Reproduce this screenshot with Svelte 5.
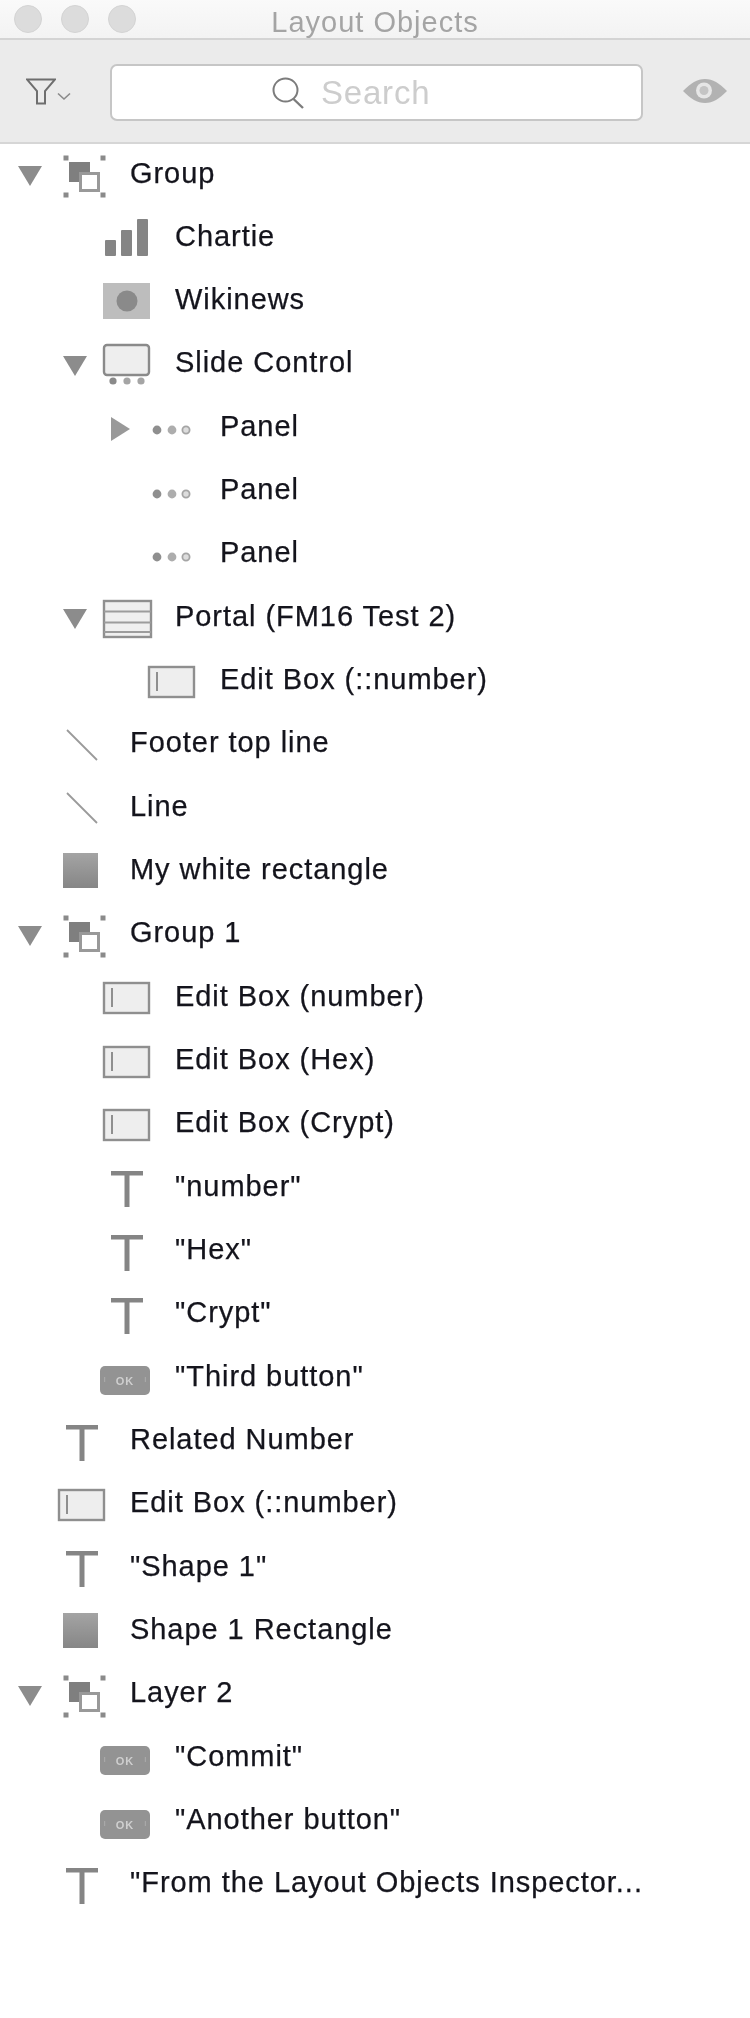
<script>
  const rows = [
    { t: 'Group', l: 0, i: 'group', a: 'down' },
    { t: 'Chartie', l: 1, i: 'chart' },
    { t: 'Wikinews', l: 1, i: 'web' },
    { t: 'Slide Control', l: 1, i: 'slide', a: 'down' },
    { t: 'Panel', l: 2, i: 'panel', a: 'right' },
    { t: 'Panel', l: 2, i: 'panel' },
    { t: 'Panel', l: 2, i: 'panel' },
    { t: 'Portal (FM16 Test 2)', l: 1, i: 'portal', a: 'down' },
    { t: 'Edit Box (::number)', l: 2, i: 'edit' },
    { t: 'Footer top line', l: 0, i: 'line' },
    { t: 'Line', l: 0, i: 'line' },
    { t: 'My white rectangle', l: 0, i: 'rect' },
    { t: 'Group 1', l: 0, i: 'group', a: 'down' },
    { t: 'Edit Box (number)', l: 1, i: 'edit' },
    { t: 'Edit Box (Hex)', l: 1, i: 'edit' },
    { t: 'Edit Box (Crypt)', l: 1, i: 'edit' },
    { t: '"number"', l: 1, i: 'text' },
    { t: '"Hex"', l: 1, i: 'text' },
    { t: '"Crypt"', l: 1, i: 'text' },
    { t: '"Third button"', l: 1, i: 'button' },
    { t: 'Related Number', l: 0, i: 'text' },
    { t: 'Edit Box (::number)', l: 0, i: 'edit' },
    { t: '"Shape 1"', l: 0, i: 'text' },
    { t: 'Shape 1 Rectangle', l: 0, i: 'rect' },
    { t: 'Layer 2', l: 0, i: 'group', a: 'down' },
    { t: '"Commit"', l: 1, i: 'button' },
    { t: '"Another button"', l: 1, i: 'button' },
    { t: '"From the Layout Objects Inspector...', l: 0, i: 'text' }
  ];
</script>

<div class="window">
  <header class="titlebar">
    <div class="lights"><span></span><span></span><span></span></div>
    <div class="title">Layout Objects</div>
  </header>

  <div class="toolbar">
    <svg class="filter" width="30" height="27" viewBox="0 0 30 27" fill="none">
      <path d="M1 1.5 H29 L19 13 V25.5 H11 V13 Z" stroke="#6e6e6e" stroke-width="2" />
    </svg>
    <svg class="chev" width="16" height="9" viewBox="0 0 16 9" fill="none">
      <path d="M2 1.5 L8 7 L14 1.5" stroke="#8a8a8a" stroke-width="1.6" />
    </svg>
    <div class="search">
      <svg width="33" height="32" viewBox="0 0 33 32" fill="none">
        <ellipse cx="13.5" cy="13" rx="12" ry="11.5" stroke="#7c7c7c" stroke-width="2" />
        <path d="M21.5 22 L31 31" stroke="#7c7c7c" stroke-width="2.4" />
      </svg>
      <span>Search</span>
    </div>
    <svg class="eye" width="44" height="24" viewBox="0 0 44 24">
      <path d="M0 12 C8 4 14 0 22 0 C30 0 36 4 44 12 C36 20 30 24 22 24 C14 24 8 20 0 12 Z" fill="#b2b2b2" />
      <circle cx="21" cy="11.5" r="8" fill="#e6e6e6" />
      <circle cx="21" cy="11.5" r="4.5" fill="#c4c4c4" />
    </svg>
  </div>

  <ul class="tree">
    {#each rows as r}
      <li class="row lvl{r.l}">
        <span class="arrow">
          {#if r.a === 'down'}
            <svg width="36" height="56" viewBox="0 0 36 56"><path d="M6 22 H30 L18 42 Z" fill="#8c8c8c" /></svg>
          {:else if r.a === 'right'}
            <svg width="36" height="56" viewBox="0 0 36 56"><path d="M9 20 L28 32 L9 44 Z" fill="#999" /></svg>
          {/if}
        </span>
        <svg class="icon" width="56" height="56" viewBox="0 0 56 56">
          {#if r.i === 'group'}
            <g fill="#8a8a8a">
              <rect x="9.5" y="11.5" width="5" height="5" /><rect x="46.5" y="11.5" width="5" height="5" />
              <rect x="9.5" y="48.5" width="5" height="5" /><rect x="46.5" y="48.5" width="5" height="5" />
              <rect x="15" y="18" width="21" height="20" fill="#7f7f7f" />
            </g>
            <rect x="26.5" y="29.5" width="18" height="17" fill="#fff" stroke="#999" stroke-width="3" />
          {:else if r.i === 'chart'}
            <g fill="#858585">
              <rect x="6" y="33" width="11" height="16" rx="1" />
              <rect x="22" y="23" width="11" height="26" rx="1" />
              <rect x="38" y="12" width="11" height="37" rx="1" />
            </g>
          {:else if r.i === 'web'}
            <rect x="4" y="12" width="47" height="36" fill="#bdbdbd" />
            <circle cx="28" cy="30" r="10.5" fill="#8a8a8a" />
          {:else if r.i === 'slide'}
            <rect x="5" y="11" width="45" height="30" rx="3" fill="#eee" stroke="#8a8a8a" stroke-width="2.4" />
            <circle cx="14" cy="47" r="3.6" fill="#8a8a8a" />
            <circle cx="28" cy="47" r="3.6" fill="#a5a5a5" />
            <circle cx="42" cy="47" r="3.6" fill="#a5a5a5" />
          {:else if r.i === 'panel'}
            <circle cx="13" cy="33" r="4.4" fill="#8f8f8f" />
            <circle cx="28" cy="33" r="4.4" fill="#adadad" />
            <circle cx="42" cy="33" r="3.6" fill="#ddd" stroke="#a5a5a5" stroke-width="1.8" />
          {:else if r.i === 'portal'}
            <rect x="5" y="14" width="47" height="36" fill="#efefef" stroke="#8f8f8f" stroke-width="2.4" />
            <path d="M5 24.5 H52 M5 35.5 H52 M5 45 H52" stroke="#9c9c9c" stroke-width="2" />
          {:else if r.i === 'edit'}
            <rect x="5" y="16" width="45" height="30" fill="#eee" stroke="#8f8f8f" stroke-width="2.4" />
            <path d="M13 21 V40" stroke="#8f8f8f" stroke-width="2" />
          {:else if r.i === 'line'}
            <path d="M13 16 L43 46" stroke="#9a9a9a" stroke-width="1.8" />
          {:else if r.i === 'rect'}
            <rect x="9" y="12" width="35" height="35" fill="url(#shade)" />
          {:else if r.i === 'text'}
            <path d="M12 14 H44 V18.5 H30.5 V50 H25.5 V18.5 H12 Z" fill="#858585" />
          {:else if r.i === 'button'}
            <rect x="1" y="19" width="50" height="29" rx="5" fill="#939393" />
            <rect x="5" y="30" width="1.2" height="5" fill="#a8a8a8" />
            <rect x="45.8" y="30" width="1.2" height="5" fill="#a8a8a8" />
            <text x="26" y="37.5" class="ok">OK</text>
          {/if}
        </svg>
        <span class="label">{r.t}</span>
      </li>
    {/each}
  </ul>

  <svg class="defs" width="0" height="0" aria-hidden="true">
    <defs>
      <linearGradient id="shade" x1="0" y1="0" x2="0" y2="1">
        <stop offset="0" stop-color="#a4a4a4" />
        <stop offset="1" stop-color="#868686" />
      </linearGradient>
    </defs>
  </svg>
</div>

<style>
  :global(body) {
    margin: 0;
    background: #fff;
  }
  .window {
    width: 750px;
    height: 2018px;
    overflow: hidden;
    background: #fff;
    font-family: "Liberation Sans", Arial, sans-serif;
    filter: blur(0.6px);
  }
  .titlebar {
    height: 40px;
    box-sizing: border-box;
    background: linear-gradient(#fafafa, #f3f3f3);
    border-bottom: 2px solid #d4d4d4;
    display: flex;
    align-items: center;
    justify-content: center;
    position: relative;
  }
  .lights {
    position: absolute;
    left: 14px;
    top: 5px;
    display: flex;
    gap: 19px;
  }
  .lights span {
    width: 28px;
    height: 28px;
    border-radius: 50%;
    background: #dcdcdc;
    border: 1px solid #d4d4d4;
    box-sizing: border-box;
  }
  .title {
    font-size: 29px;
    letter-spacing: 1px;
    color: #a4a4a4;
    margin-top: 6px;
  }
  .toolbar {
    height: 104px;
    box-sizing: border-box;
    background: #ebebeb;
    border-bottom: 2px solid #d6d6d6;
    display: flex;
    align-items: center;
    position: relative;
    padding-left: 26px;
  }
  .chev {
    margin: 10px 0 0 0;
  }
  .search {
    width: 533px;
    height: 57px;
    margin-left: 38px;
    margin-top: 2px;
    padding-left: 160px;
    box-sizing: border-box;
    background: #fff;
    border: 2px solid #c6c6c6;
    border-radius: 7px;
    display: flex;
    align-items: center;
    gap: 16px;
    color: #cdcdcd;
    font-size: 33px;
    letter-spacing: 0.8px;
  }
  .search span {
    margin-top: 2px;
  }
  .search svg {
    margin-top: 2px;
  }
  .eye {
    margin-left: 40px;
  }
  .tree {
    list-style: none;
    margin: 0;
    padding: 0;
    display: flex;
    flex-direction: column;
    gap: 7.33px;
  }
  .row {
    height: 56px;
    display: flex;
    align-items: center;
    white-space: nowrap;
  }
  .lvl0 { padding-left: 12px; }
  .lvl1 { padding-left: 57px; }
  .lvl2 { padding-left: 102px; }
  .arrow {
    width: 36px;
    height: 56px;
    flex: none;
    margin-right: 6px;
  }
  .icon {
    flex: none;
    overflow: visible;
  }
  .label {
    margin: 2px 0 0 20px;
    font-size: 29px;
    letter-spacing: 0.95px;
    color: #14141c;
    -webkit-text-stroke: 0.25px #14141c;
  }
  .ok {
    font-size: 11px;
    font-weight: 700;
    letter-spacing: 1px;
    fill: #cfcfcf;
    text-anchor: middle;
  }
  .defs {
    position: absolute;
  }
</style>
